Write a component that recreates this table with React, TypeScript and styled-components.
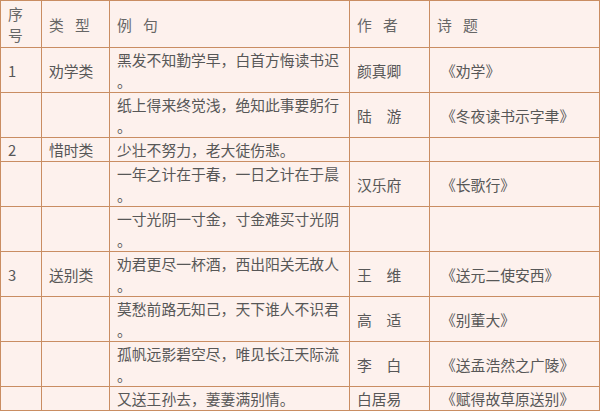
import React from "react";
import styled, { createGlobalStyle } from "styled-components";

const GlobalStyle = createGlobalStyle`
  html, body {
    margin: 0;
    padding: 0;
    background: #ffffff;
  }
  body {
    font-family: "Noto Sans CJK SC", "Noto Sans", sans-serif;
  }
`;

const Table = styled.table`
  width: 599px;
  table-layout: fixed;
  border-collapse: collapse;
  background: #fdf1ed;
  color: #575757;
  font-size: 14.8px;
  line-height: 21px;
  border: 1px solid #c98d62;
`;

const Th = styled.th`
  font-weight: 400;
  text-align: left;
  vertical-align: middle;
  padding: 1px 6px 1px 7px;
  height: 44px;
  border: 1px solid #c98d62;
  word-spacing: 8px;
  color: #666;
`;

const Td = styled.td<{ $top?: boolean; $indent?: boolean }>`
  text-align: left;
  vertical-align: ${(p) => (p.$top ? "top" : "middle")};
  padding: 1px 6px 1px ${(p) => (p.$indent ? "11px" : "7px")};
  border: 1px solid #c98d62;
  line-break: anywhere;
  word-break: break-all;
`;

type Row = {
  no?: string;
  kind?: string;
  line: string;
  author?: string;
  title?: string;
};

const rows: Row[] = [
  { no: "1", kind: "劝学类", line: "黑发不知勤学早，白首方悔读书迟。", author: "颜真卿", title: "《劝学》" },
  { line: "纸上得来终觉浅，绝知此事要躬行。", author: "陆　游", title: "《冬夜读书示字聿》" },
  { no: "2", kind: "惜时类", line: "少壮不努力，老大徒伤悲。" },
  { line: "一年之计在于春，一日之计在于晨。", author: "汉乐府", title: "《长歌行》" },
  { line: "一寸光阴一寸金，寸金难买寸光阴。" },
  { no: "3", kind: "送别类", line: "劝君更尽一杯酒，西出阳关无故人。", author: "王　维", title: "《送元二使安西》" },
  { line: "莫愁前路无知己，天下谁人不识君。", author: "高　适", title: "《别董大》" },
  { line: "孤帆远影碧空尽，唯见长江天际流。", author: "李　白", title: "《送孟浩然之广陵》" },
  { line: "又送王孙去，萋萋满别情。", author: "白居易", title: "《赋得故草原送别》" },
];

export default function App() {
  return (
    <>
      <GlobalStyle />
      <Table>
        <colgroup>
          <col style={{ width: 41 }} />
          <col style={{ width: 68 }} />
          <col style={{ width: 240 }} />
          <col style={{ width: 80 }} />
          <col style={{ width: 170 }} />
        </colgroup>
        <thead>
          <tr>
            <Th>序号</Th>
            <Th>类 型</Th>
            <Th>例 句</Th>
            <Th>作 者</Th>
            <Th>诗 题</Th>
          </tr>
        </thead>
        <tbody>
          {rows.map((r, i) => (
            <tr key={i}>
              <Td>{r.no ?? ""}</Td>
              <Td>{r.kind ?? ""}</Td>
              <Td $top>{r.line}</Td>
              <Td>{r.author ?? ""}</Td>
              <Td $indent>{r.title ?? ""}</Td>
            </tr>
          ))}
        </tbody>
      </Table>
    </>
  );
}
